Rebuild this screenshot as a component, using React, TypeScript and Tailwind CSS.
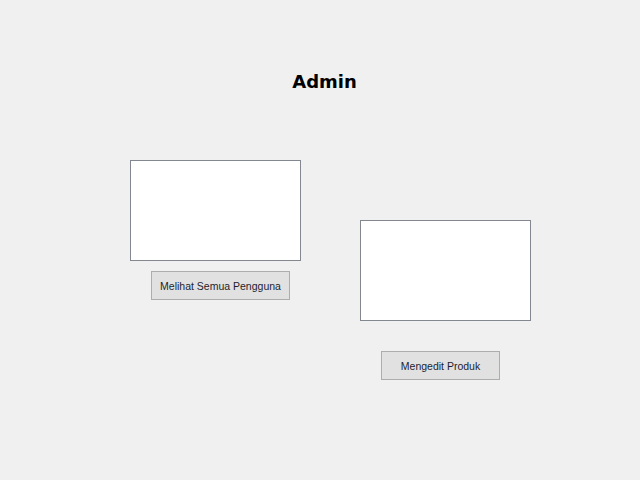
export default function App() {
  return (
    <div className="h-[480px] w-[640px] bg-[#f0f0f0] font-['Liberation_Sans',sans-serif]">
      <div className="flex justify-center pl-[9px] pt-[71px]">
        <h1 className="font-['DejaVu_Sans',sans-serif] text-[18px] font-bold leading-[21px] text-black">
          Admin
        </h1>
      </div>

      <div className="mt-[68px] flex items-start pl-[130px]">
        <div className="flex flex-col">
          <div className="h-[101px] w-[171px] border border-[#828790] bg-white" />
          <button
            type="button"
            className="ml-[21px] mt-[10px] h-[29px] w-[139px] border border-[#adadad] bg-[#e1e1e1] pt-[2px] text-[10.5px] text-[#1e1e2e]"
          >
            Melihat Semua Pengguna
          </button>
        </div>

        <div className="ml-[59px] mt-[60px] flex flex-col">
          <div className="h-[101px] w-[171px] border border-[#828790] bg-white" />
          <button
            type="button"
            className="ml-[21px] mt-[30px] h-[29px] w-[119px] border border-[#adadad] bg-[#e1e1e1] pt-[2px] text-[10.5px] text-[#1e1e2e]"
          >
            Mengedit Produk
          </button>
        </div>
      </div>
    </div>
  );
}
